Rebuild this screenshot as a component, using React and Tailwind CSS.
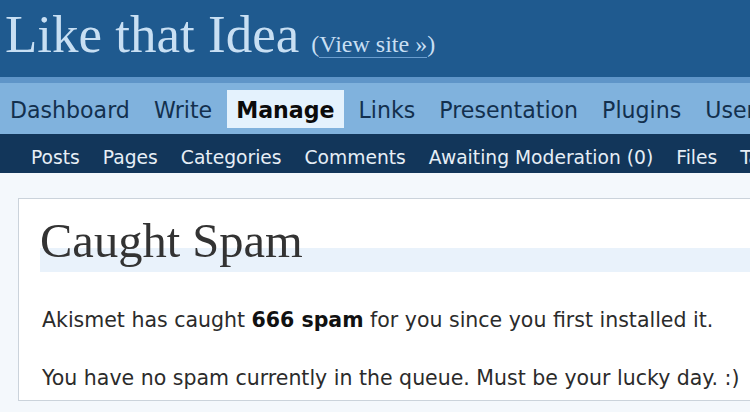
const menu = ['Dashboard', 'Write', 'Manage', 'Links', 'Presentation', 'Plugins', 'Users'];
const submenu = ['Posts', 'Pages', 'Categories', 'Comments', 'Awaiting Moderation (0)', 'Files', 'Tags'];

export default function App() {
  return (
    <div className="w-[750px] h-[412px] overflow-hidden bg-[#f4f8fc]">
      {/* Site header */}
      <div className="h-[77px] bg-[#1f5a8f] pt-[8px] pl-[5px] flex items-baseline whitespace-nowrap font-['Liberation_Serif',serif] text-[#c8dff3]">
        <h1 className="text-[53px] leading-[53px]">Like that Idea</h1>
        <span className="ml-[12px] text-[24px] leading-[24px]">
          (<span className="border-b border-[#6a9dce]">View site »</span>)
        </span>
      </div>
      <div className="h-[6px] bg-[#5f95c8]" />

      {/* Main menu */}
      <div className="h-[51px] bg-[#80b2dd] pl-[1px] pt-[7px] flex gap-[6px] whitespace-nowrap font-['DejaVu_Sans',sans-serif] text-[22.1px]">
        {menu.map((item) =>
          item === 'Manage' ? (
            <span key={item} className="h-[38px] leading-[41px] px-[9px] bg-[#e4f2fd] font-bold text-[#0b0b0b]">
              {item}
            </span>
          ) : (
            <span key={item} className="h-[38px] leading-[41px] px-[9px] text-[#13304e]">
              {item}
            </span>
          )
        )}
      </div>

      {/* Sub menu */}
      <div className="h-[39px] bg-[#12365a] pl-[31px] pt-[9px] flex gap-[23px] whitespace-nowrap font-['DejaVu_Sans',sans-serif] text-[18.7px] leading-[30px] text-[#e6eef6]">
        {submenu.map((item) => (
          <span key={item}>{item}</span>
        ))}
      </div>

      {/* Content card */}
      <div className="ml-[18px] mt-[25px] w-[760px] bg-white border border-[#cbd3db] pb-[8px]">
        <h2 className="ml-[21px] mt-[34px] text-[48.5px] leading-[15px] border-b-[24px] border-[#e9f2fb] text-[#333333] font-['Liberation_Serif',serif] whitespace-nowrap">
          Caught Spam
        </h2>
        <div className="ml-[23px] font-['DejaVu_Sans',sans-serif] text-[20.5px] leading-[28px] text-[#2b2b2b] whitespace-nowrap">
          <p className="mt-[34px]">
            Akismet has caught <strong className="font-bold text-[#111]">666 spam</strong> for you since you first installed it.
          </p>
          <p className="mt-[30px]">You have no spam currently in the queue. Must be your lucky day. :)</p>
        </div>
      </div>
    </div>
  );
}
